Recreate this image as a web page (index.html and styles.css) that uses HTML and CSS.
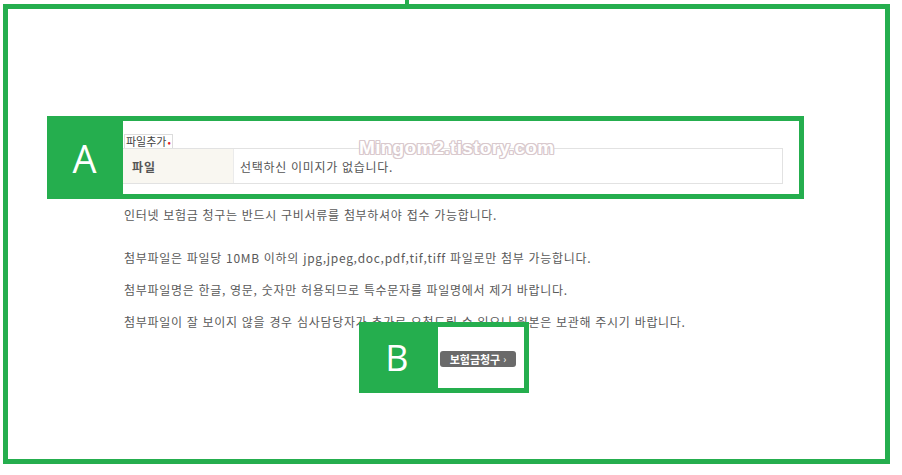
FILE: index.html
```html
<!DOCTYPE html>
<html lang="ko">
<head>
<meta charset="utf-8">
<title>보험금 청구</title>
<link rel="stylesheet" href="styles.css">
</head>
<body>
<div class="tick"></div>
<div class="frame">
  <div class="box-a">
    <div class="mark">A</div>
    <div class="a-body">
      <div class="tab">파일추가<span class="req">•</span></div>
      <div class="table">
        <div class="th">파일</div>
        <div class="td">선택하신 이미지가 없습니다.</div>
      </div>
    </div>
    <div class="watermark">Mingom2.tistory.com</div>
  </div>
  <div class="notes">
    <p class="note first">인터넷 보험금 청구는 반드시 구비서류를 첨부하셔야 접수 가능합니다.</p>
    <p class="note">첨부파일은 파일당 10MB 이하의 jpg,jpeg,doc,pdf,tif,tiff 파일로만 첨부 가능합니다.</p>
    <p class="note">첨부파일명은 한글, 영문, 숫자만 허용되므로 특수문자를 파일명에서 제거 바랍니다.</p>
    <p class="note">첨부파일이 잘 보이지 않을 경우 심사담당자가 추가로 요청드릴 수 있으니 원본은 보관해 주시기 바랍니다.</p>
  </div>
  <div class="box-b">
    <div class="mark mark-b">B</div>
    <div class="b-body">
      <span class="btn">보험금청구 <span class="arr">›</span></span>
    </div>
  </div>
</div>
</body>
</html>
```
FILE: styles.css
```css
body {
  margin: 0;
  background: #fff;
  font-family: "Noto Sans CJK KR", "Noto Sans", sans-serif;
}
.tick {
  margin-left: 405px;
  width: 4px;
  height: 4px;
  background: #25ae4e;
}
.frame {
  margin-left: 3px;
  width: 887px;
  height: 460px;
  box-sizing: border-box;
  border: 5px solid #25ae4e;
  padding-top: 107px;
  padding-left: 39px;
}
.box-a {
  position: relative;
  width: 757px;
  height: 83px;
  box-sizing: border-box;
  border: 5px solid #25ae4e;
  display: flex;
}
.mark {
  width: 71px;
  flex: none;
  background: #25ae4e;
  color: #fff;
  font-family: "Open Sans", "Noto Sans", sans-serif;
  font-size: 38px;
  font-weight: 400;
  display: flex;
  align-items: center;
  justify-content: center;
  padding-right: 6px;
  box-sizing: border-box;
}
.a-body {
  flex: 1;
  padding-top: 13px;
}
.tab {
  width: max-content;
  margin-left: 1px;
  height: 14px;
  box-sizing: border-box;
  padding: 0 1px;
  border: 1px solid #dcdcdc;
  border-bottom: none;
  font-size: 11px;
  line-height: 13px;
  color: #444;
}
.req {
  color: #e0202a;
  font-size: 10px;
  margin-left: 1px;
}
.table {
  display: flex;
  width: 660px;
  height: 36px;
  box-sizing: border-box;
  border: 1px solid #e2e2e2;
  border-left: none;
}
.th {
  width: 111px;
  background: #f9f7f1;
  border-right: 1px solid #ebebeb;
  font-size: 12px;
  font-weight: 700;
  color: #555;
  padding-left: 9px;
  padding-top: 1px;
  box-sizing: border-box;
  display: flex;
  align-items: center;
  letter-spacing: 1px;
}
.td {
  padding-left: 6px;
  padding-top: 1px;
  font-size: 12px;
  color: #555;
  display: flex;
  align-items: center;
  letter-spacing: 0.7px;
}
.watermark {
  position: absolute;
  left: 307px;
  top: 17px;
  font-family: "Liberation Sans", Arial, sans-serif;
  font-weight: 700;
  font-size: 19px;
  line-height: 20px;
  color: #fff;
  letter-spacing: 0.3px;
  text-shadow: 1px 0 0 #d9c9cd, -1px 0 0 #d9c9cd, 0 1px 0 #d9c9cd, 0 -1px 0 #d9c9cd,
    1px 1px 0 #d9c9cd, -1px -1px 0 #d9c9cd, 1px -1px 0 #d9c9cd, -1px 1px 0 #d9c9cd;
}
.notes {
  margin-left: 77px;
}
.note {
  margin: 0;
  font-size: 12px;
  line-height: 32px;
  color: #5a5a5a;
  white-space: nowrap;
  letter-spacing: 0.7px;
}
.note.first {
  margin-bottom: 11px;
}
.box-b {
  position: relative;
  margin-top: -16px;
  margin-left: 312px;
  width: 170px;
  height: 71px;
  box-sizing: border-box;
  border: 5px solid #25ae4e;
  display: flex;
}
.mark-b {
  width: 74px;
  font-size: 36px;
  padding-right: 8px;
}
.b-body {
  flex: 1;
  background: #fff;
  display: flex;
  align-items: center;
  padding-left: 2px;
  padding-top: 3px;
}
.btn {
  display: inline-flex;
  align-items: center;
  justify-content: center;
  width: 76px;
  height: 16px;
  border-radius: 3px;
  background: #6a6a6a;
  color: #fff;
  font-size: 11px;
  font-weight: 700;
  line-height: 16px;
  white-space: pre;
}
.arr {
  font-weight: 400;
  font-size: 10px;
}
```
